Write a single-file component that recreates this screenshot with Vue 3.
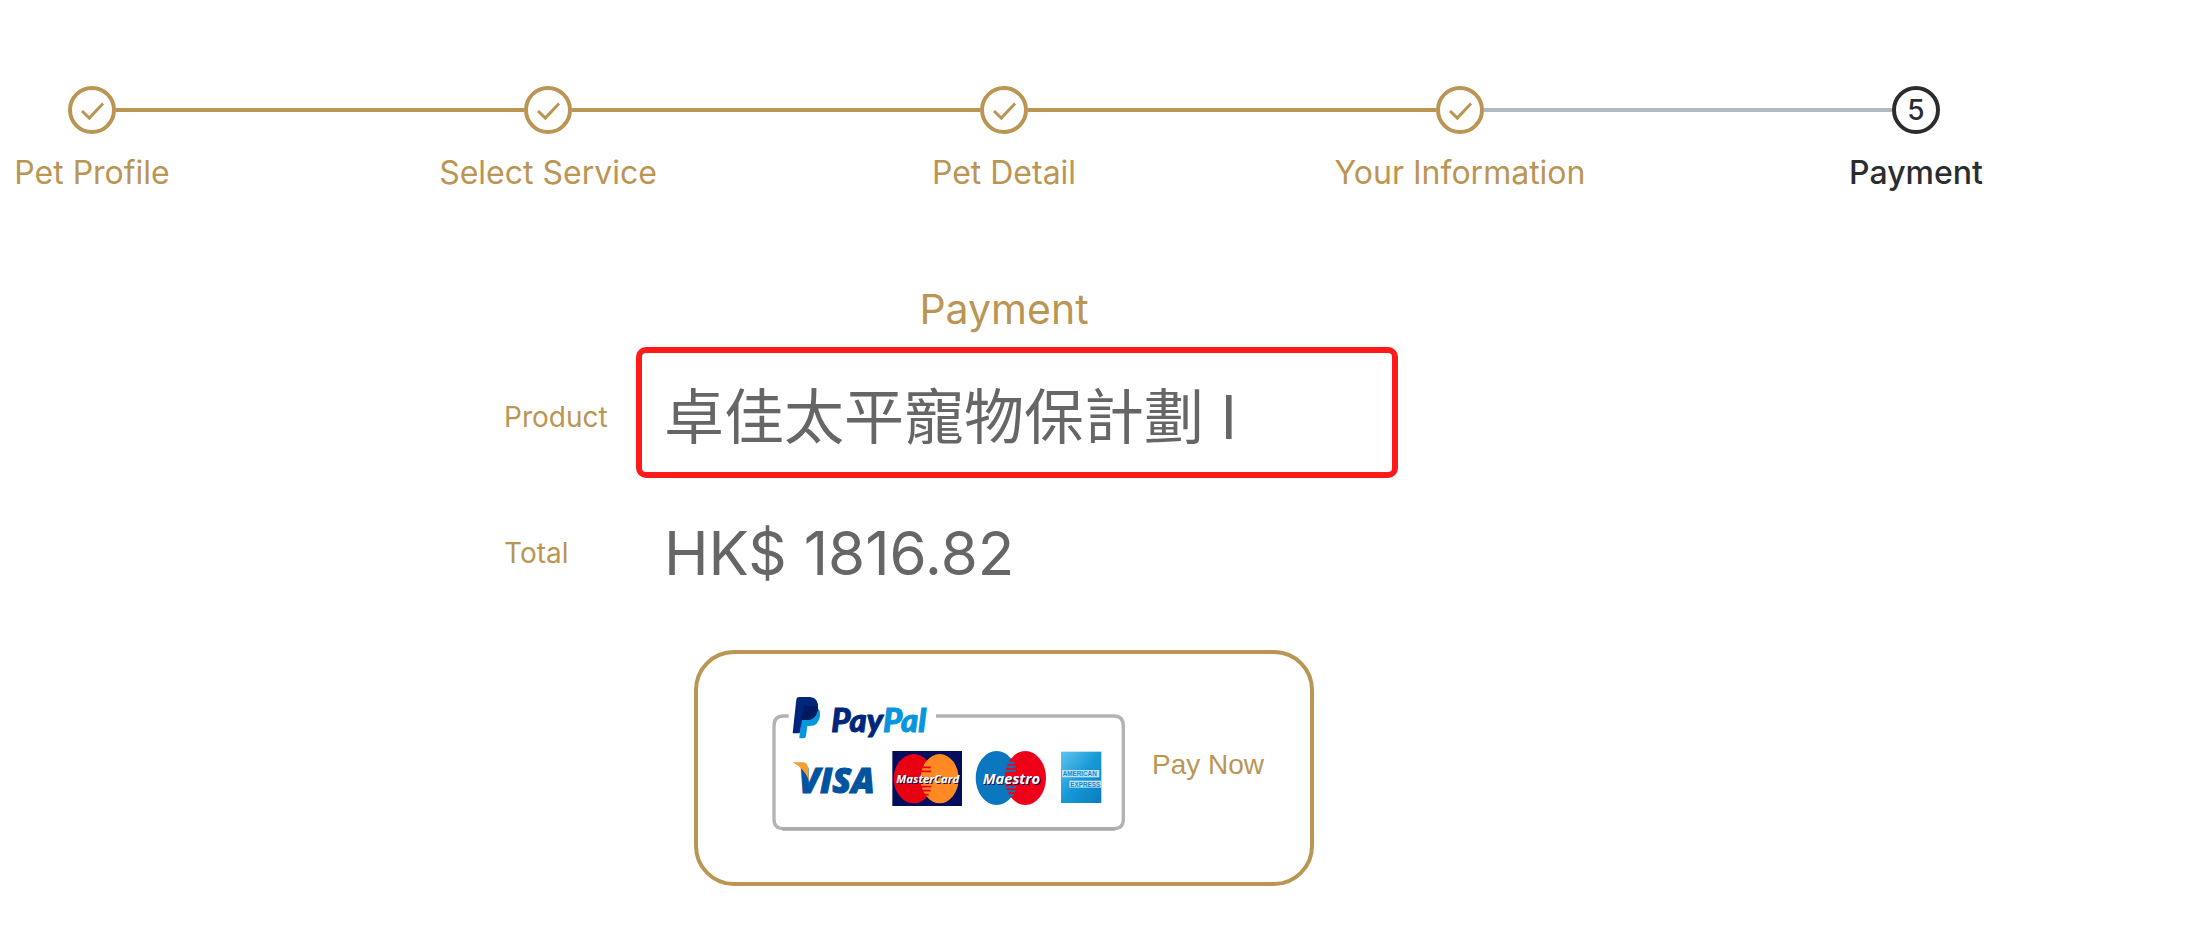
<script setup>
const steps = [
  { label: 'Pet Profile', done: true },
  { label: 'Select Service', done: true },
  { label: 'Pet Detail', done: true },
  { label: 'Your Information', done: true },
  { label: 'Payment', done: false }
]
</script>

<template>
  <main class="page">
    <ol class="steps">
      <li v-for="(step, i) in steps" :key="step.label" class="step" :class="{ done: step.done, current: !step.done }">
        <span class="marker">
          <svg v-if="step.done" class="check" viewBox="0 0 48 48" aria-hidden="true">
            <path d="M14 25 L21.300 32 L35 17.500" />
          </svg>
          <span v-else>{{ i + 1 }}</span>
        </span>
        <span class="label">{{ step.label }}</span>
      </li>
    </ol>

    <h1 class="title">Payment</h1>

    <dl class="summary">
      <div class="row">
        <dt>Product</dt>
        <dd class="highlight">卓佳太平寵物保計劃 I</dd>
      </div>
      <div class="row">
        <dt>Total</dt>
        <dd>HK$ 1816.82</dd>
      </div>
    </dl>

    <button class="pay" type="button">
      <svg class="brands" viewBox="0 0 1140 510" aria-hidden="true">
        <defs>
          <linearGradient id="amex" x1="0" y1="0" x2="1" y2="1">
            <stop offset="0" stop-color="#5fc4ee" />
            <stop offset="0.5" stop-color="#1798d6" />
            <stop offset="1" stop-color="#0a7cc0" />
          </linearGradient>
        </defs>
        <path d="M86 108 H70 Q42 108 42 138 V418 Q42 446 70 446 H1062 Q1090 446 1090 418 V138 Q1090 108 1062 108 H528" fill="none" stroke="#b3b3b3" stroke-width="10" />
        <path d="M66 447 H1066" stroke="#aaa" stroke-width="11" />

        <path d="M128 78 H158 Q184 84 180 108 Q176 138 148 138 H142 L138 168 Q137 175 130 175 H118 Z" fill="#0795de" />
        <path d="M118 51 H150 Q177 53 174 86 Q170 120 138 120 H126 L119 160 H98 L109 58 Q110 51 118 51 Z" fill="#00267c" />
        <path d="M132 78 H158 Q170 78 174 84 Q170 120 138 120 H124 Z" fill="#001a60" />
        <text x="214" y="155" class="paypal"><tspan fill="#00267c" stroke="#00267c">Pay</tspan><tspan fill="#0795de" stroke="#0795de">Pal</tspan></text>

        <text x="116" y="338" class="visa">VISA</text>
        <path d="M98 247 H130 Q143 249 144 264 L148 304 Q134 266 98 247 Z" fill="#f89c2b" />

        <rect x="397" y="213" width="209" height="165" fill="#000c5c" />
        <ellipse cx="461" cy="296" rx="60" ry="74" fill="#e60012" />
        <ellipse cx="539" cy="296" rx="57" ry="74" fill="#ff8a24" />
        <path d="M484 262 H512 M484 274 H514 M484 320 H514 M488 332 H512 M490 344 H506" stroke="#e60012" stroke-width="5" />
        <text x="412" y="312" class="card master shade">MasterCard</text>
        <text x="409" y="308" class="card master">MasterCard</text>

        <ellipse cx="710" cy="294" rx="63" ry="81" fill="#0a77be" />
        <ellipse cx="796" cy="294" rx="62" ry="81" fill="#ee0019" />
        <path d="M744 248 H764 M738 260 H766 M735 272 H768 M735 322 H768 M738 334 H766 M744 346 H762" stroke="#0a77be" stroke-width="6" />
        <text x="671" y="315" class="card maestro shade">Maestro</text>
        <text x="668" y="311" class="card maestro">Maestro</text>

        <rect x="903" y="215" width="121" height="154" fill="url(#amex)" />
        <rect x="906" y="270" width="112" height="22" fill="#b9e1f4" />
        <rect x="928" y="302" width="96" height="21" fill="#b9e1f4" />
        <text x="908" y="289" class="amex">AMERICAN</text>
        <text x="931" y="320" class="amex">EXPRESS</text>
      </svg>
      <span>Pay Now</span>
    </button>
  </main>
</template>

<style>
body {
  margin: 0;
  background: #fff;
  overflow-x: hidden;
}
</style>

<style scoped>
.page {
  display: flex;
  flex-direction: column;
  align-items: center;
  margin: 0 62px 0 -136px;
  padding: 86px 0 40px;
  font-family: Inter, "Noto Sans CJK TC", sans-serif;
  color: #bb9553;
}

.steps {
  display: flex;
  align-self: stretch;
  margin: 0;
  padding: 0;
  list-style: none;
}

.step {
  position: relative;
  flex: 1;
  display: flex;
  flex-direction: column;
  align-items: center;
  gap: 19px;
}

/* Connector from this marker to the next one */
.step:not(:last-child)::after {
  content: "";
  position: absolute;
  top: 22px;
  left: calc(50% + 24px);
  width: calc(100% - 48px);
  height: 4px;
  background: #bb9553;
}

.step:nth-last-child(2)::after {
  background: #b3b9c1;
}

.marker {
  box-sizing: border-box;
  display: flex;
  align-items: center;
  justify-content: center;
  width: 48px;
  height: 48px;
  border: 4px solid currentColor;
  border-radius: 50%;
  font-size: 28px;
  font-weight: 500;
}

.check {
  flex: none;
  width: 48px;
  height: 48px;
  fill: none;
  stroke: currentColor;
  stroke-width: 3;
}

.label {
  font-size: 32px;
  line-height: 40px;
}

.current {
  color: #2b2c2e;
}

.current .label {
  font-weight: 500;
}

.title {
  margin: 88px 0 10px;
  font-size: 41px;
  font-weight: 400;
  line-height: 56px;
}

.summary {
  display: grid;
  gap: 39px;
  width: 1000px;
  max-width: 100%;
  margin: 0;
}

.row {
  display: grid;
  grid-template-columns: 132px 1fr;
  align-items: center;
}

dt {
  font-size: 28px;
}

.row:first-child dt {
  padding-top: 8px;
}

dd {
  margin: 0;
  padding-left: 28px;
  font-size: 60px;
  line-height: 72px;
  color: #666;
}

.highlight {
  max-width: 728px;
  padding: 28px 0 19px 22px;
  border: 6px solid #ff1a1a;
  border-radius: 10px;
}

.pay {
  display: flex;
  align-items: center;
  gap: 12px;
  margin-top: 61px;
  padding: 26px 46px 32px 62px;
  border: 4px solid #bb9553;
  border-radius: 40px;
  background: transparent;
  color: inherit;
  font-family: "Liberation Sans", sans-serif;
  font-size: 28px;
}

.brands {
  width: 380px;
  height: 170px;
}

.paypal {
  font: italic 900 98px Lato, sans-serif;
  stroke-width: 3;
}

.visa {
  font: italic 800 104px "Open Sans", sans-serif;
  fill: #00539f;
  stroke: #00539f;
  stroke-width: 3;
}

.card {
  font-family: "Open Sans", sans-serif;
  font-style: italic;
  font-weight: 700;
  fill: #fff;
}

.master {
  font-size: 34px;
}

.maestro {
  font-size: 44px;
}

.shade {
  fill: #10104a;
}

.amex {
  font: 700 19px "Liberation Sans", sans-serif;
  fill: #1c86c4;
}
</style>
